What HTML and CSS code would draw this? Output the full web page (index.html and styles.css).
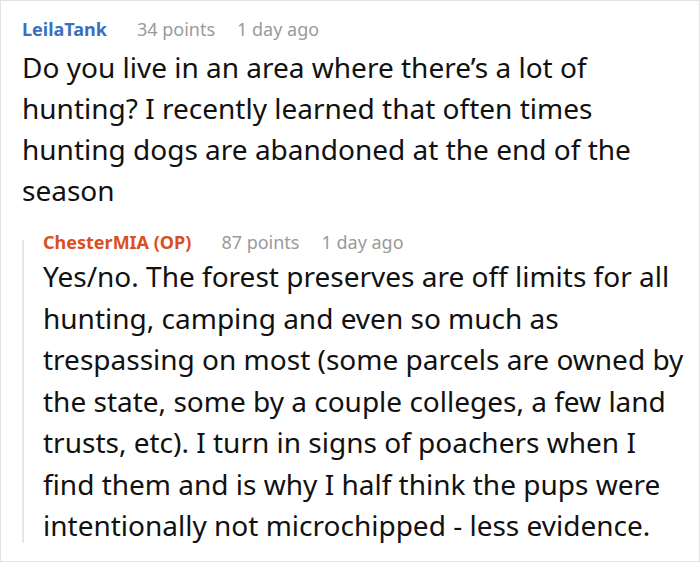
FILE: index.html
```html
<!DOCTYPE html>
<html>
<head>
<meta charset="utf-8">
<link rel="stylesheet" href="styles.css">
</head>
<body>
<div class="frame">
  <div class="comment">
    <div class="meta">
      <span class="user user-blue">LeilaTank</span>
      <span class="info">34 points</span>
      <span class="info">1 day ago</span>
    </div>
    <p class="text">Do you live in an area where there’s a lot of hunting? I recently learned that often times hunting dogs are abandoned at the end of the season</p>
    <div class="reply">
      <div class="meta">
        <span class="user user-orange">ChesterMIA (OP)</span>
        <span class="info">87 points</span>
        <span class="info">1 day ago</span>
      </div>
      <p class="text">Yes/no. The forest preserves are off limits for all hunting, camping and even so much as trespassing on most (some parcels are owned by the state, some by a couple colleges, a few land trusts, etc). I turn in signs of poachers when I find them and is why I half think the pups were intentionally not microchipped - less evidence.</p>
    </div>
  </div>
</div>
</body>
</html>
```
FILE: styles.css
```css
html, body {
  margin: 0;
  padding: 0;
  background: #fff;
}
.frame {
  width: 700px;
  height: 562px;
  box-sizing: border-box;
  border: 1px solid #e2e2e2;
  overflow: hidden;
  font-family: "Noto Sans", "Open Sans", sans-serif;
}
.comment {
  padding: 15px 8px 0 21px;
}
.meta {
  display: flex;
  gap: 0 30px;
  font-size: 18px;
  line-height: 26px;
  align-items: baseline;
}
.info {
  color: #9a9a9a;
}
.info + .info {
  margin-left: -8px;
}
.user {
  font-weight: 700;
}
.user-blue {
  color: #3b6fc0;
}
.user-orange {
  color: #d9501e;
}
.text {
  margin: 5px 0 0;
  font-size: 28px;
  line-height: 41px;
  color: #111;
}
.reply {
  position: relative;
  margin-top: 18px;
  padding-left: 21px;
}
.reply::before {
  content: "";
  position: absolute;
  left: 0;
  top: 11px;
  bottom: 4px;
  width: 2px;
  background: #e6e6e6;
}
.reply .text {
  margin-top: 1px;
  line-height: 41.5px;
}
```
